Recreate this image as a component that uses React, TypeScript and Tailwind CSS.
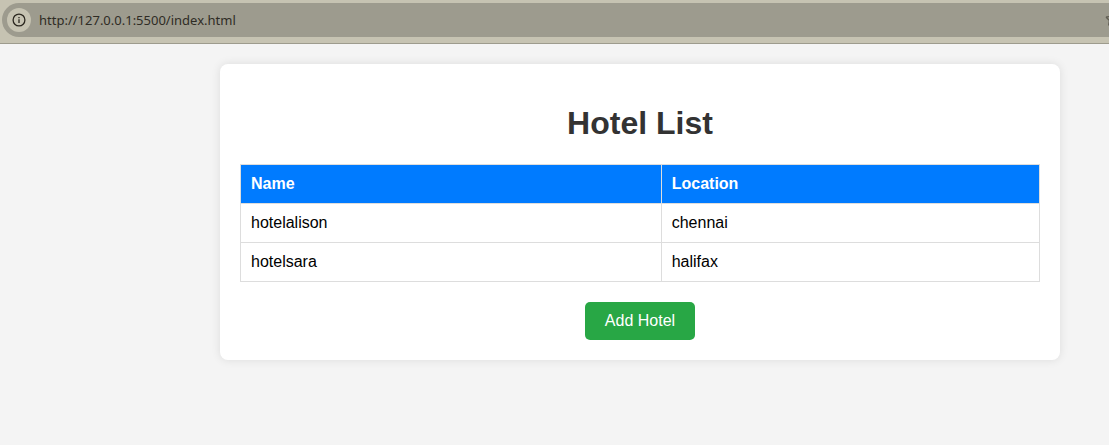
import { Star } from "lucide-react";

const hotels = [
  { name: "hotelalison", location: "chennai" },
  { name: "hotelsara", location: "halifax" },
];

function AddressBar() {
  return (
    <header className="overflow-hidden border-b border-[#9d9b8d] bg-[#c6c3b2] pt-[3px] pb-1.5 pl-0.5">
      <div className="relative flex h-[34px] items-center gap-2 rounded-l-full bg-[#9d9b8e] pl-[5px]">
        <button
          type="button"
          aria-label="View site information"
          className="flex size-6 shrink-0 items-center justify-center rounded-full bg-[#c6c3b2] text-[#2b271f]"
        >
          <svg viewBox="0 0 14 14" className="size-3.5" fill="none" stroke="currentColor" strokeWidth="1.3">
            <circle cx="7" cy="7" r="5.9" />
            <path d="M7 6.3V10M7 3.9V5.2" />
          </svg>
        </button>
        <input
          type="text"
          aria-label="Address"
          defaultValue="http://127.0.0.1:5500/index.html"
          className="min-w-0 flex-1 bg-transparent font-['Noto_Sans',sans-serif] text-[13px] leading-5 text-[#2f2c25] outline-none"
        />
        <button type="button" aria-label="Bookmark this page" className="absolute top-2 -right-3 text-[#605d53]">
          <Star className="size-4" strokeWidth={2} />
        </button>
      </div>
    </header>
  );
}

export default function App() {
  return (
    <div className="flex min-h-screen flex-col bg-[#f4f4f4] font-['Liberation_Sans',Arial,sans-serif] text-base leading-[18px] text-black">
      <AddressBar />
      <main className="flex justify-center py-5 pl-[171px]">
        <section className="w-full max-w-[840px] rounded-lg bg-white p-5 shadow-[0_0_10px_rgba(0,0,0,0.1)]">
          <h1 className="mt-5 mb-[22px] text-center text-[32px] leading-[38px] font-bold text-[#333]">Hotel List</h1>
          <table className="w-full border-collapse text-left">
            <thead>
              <tr className="bg-[#007bff] text-white">
                <th className="border border-[#ddd] p-2.5 font-bold">Name</th>
                <th className="border border-[#ddd] p-2.5 font-bold">Location</th>
              </tr>
            </thead>
            <tbody>
              {hotels.map((hotel) => (
                <tr key={hotel.name}>
                  <td className="border border-[#ddd] p-2.5">{hotel.name}</td>
                  <td className="border border-[#ddd] p-2.5">{hotel.location}</td>
                </tr>
              ))}
            </tbody>
          </table>
          <button type="button" className="mx-auto mt-5 block rounded-[5px] bg-[#28a745] px-5 py-2.5 text-white">
            Add Hotel
          </button>
        </section>
      </main>
    </div>
  );
}
